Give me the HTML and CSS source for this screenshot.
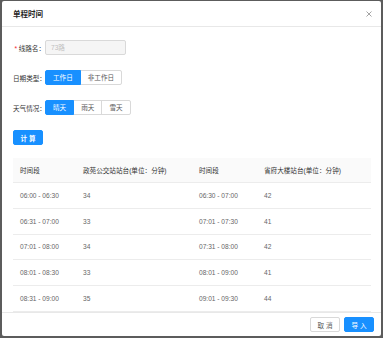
FILE: index.html
```html
<!DOCTYPE html>
<html lang="zh-CN">
<head>
    <meta charset="UTF-8">
    <meta name="viewport" content="width=device-width, initial-scale=1.0">
    <title>单程时间</title>
    <link rel="stylesheet" href="styles.css">
</head>
<body>

    <div class="modal">
        <div class="modal-header">
            <span class="modal-title">单程时间</span>
            <svg class="close" width="6" height="6" viewBox="0 0 6 6">
                <path d="M0.5 0.5 L5.5 5.5 M5.5 0.5 L0.5 5.5" stroke="#999" stroke-width="0.9" fill="none"/>
            </svg>
        </div>

        <div class="modal-body">
            <div class="form-row">
                <label class="form-label"><span class="required">*</span>线路名：</label>
                <div class="input disabled">73路</div>
            </div>

            <div class="form-row">
                <label class="form-label">日期类型：</label>
                <div class="radio-group">
                    <span class="radio active">工作日</span>
                    <span class="radio">非工作日</span>
                </div>
            </div>

            <div class="form-row">
                <label class="form-label">天气情况：</label>
                <div class="radio-group">
                    <span class="radio active">晴天</span>
                    <span class="radio">雨天</span>
                    <span class="radio">雪天</span>
                </div>
            </div>

            <button class="btn btn-primary calc">计 算</button>

            <table class="time-table">
                <colgroup>
                    <col style="width: 63px">
                    <col style="width: 116px">
                    <col style="width: 65px">
                    <col>
                </colgroup>
                <thead>
                    <tr>
                        <th>时间段</th>
                        <th>政苑公交站站台(单位：分钟)</th>
                        <th>时间段</th>
                        <th>省府大楼站台(单位：分钟)</th>
                    </tr>
                </thead>
                <tbody>
                    <tr><td>06:00 - 06:30</td><td>34</td><td>06:30 - 07:00</td><td>42</td></tr>
                    <tr><td>06:31 - 07:00</td><td>33</td><td>07:01 - 07:30</td><td>41</td></tr>
                    <tr><td>07:01 - 08:00</td><td>34</td><td>07:31 - 08:00</td><td>42</td></tr>
                    <tr><td>08:01 - 08:30</td><td>33</td><td>08:01 - 09:00</td><td>41</td></tr>
                    <tr><td>08:31 - 09:00</td><td>35</td><td>09:01 - 09:30</td><td>44</td></tr>
                </tbody>
            </table>
        </div>

        <div class="modal-footer">
            <button class="btn">取 消</button>
            <button class="btn btn-primary">导 入</button>
        </div>
    </div>

</body>
</html>
```

FILE: styles.css
```css
body {
    font-family: "Liberation Sans", "Noto Sans CJK SC", sans-serif;
    background: #5c5c5c;
    margin: 0;
    height: 338px;
    overflow: hidden;
}
.modal {
    margin: 1px 2px 0 2px;
    height: 335px;
    background: #ffffff;
    border-radius: 2px;
    display: flex;
    flex-direction: column;
    overflow: hidden;
}
.modal-header {
    height: 25px;
    flex-shrink: 0;
    display: flex;
    align-items: center;
    justify-content: space-between;
    padding: 0 9px 0 11px;
    border-bottom: 1px solid #e8e8e8;
}
.modal-title {
    font-size: 7.5px;
    font-weight: 600;
    color: #262626;
}
.close {
    display: block;
}
.modal-body {
    flex: 1;
    padding: 13px 11px 0 11px;
    overflow: hidden;
}
.form-row {
    display: flex;
    align-items: center;
    height: 15px;
    margin-bottom: 15px;
}
.form-label {
    width: 32px;
    text-align: right;
    font-size: 6.6px;
    color: #333;
    white-space: nowrap;
}
.required {
    color: #f5222d;
    margin-right: 1.5px;
}
.input {
    box-sizing: border-box;
    width: 81px;
    height: 15px;
    line-height: 13px;
    padding: 0 5px;
    border: 1px solid #d9d9d9;
    border-radius: 2px;
    font-size: 6.6px;
}
.input.disabled {
    background: #f5f5f5;
    color: #bfbfbf;
}
.radio-group {
    display: flex;
}
.radio {
    box-sizing: border-box;
    height: 15px;
    line-height: 13px;
    padding: 0 7px;
    font-size: 6.6px;
    color: #595959;
    border: 1px solid #d9d9d9;
    margin-left: -1px;
}
.radio:first-child {
    margin-left: 0;
    border-radius: 2px 0 0 2px;
}
.radio:last-child {
    border-radius: 0 2px 2px 0;
}
.radio.active {
    background: #1890ff;
    border-color: #1890ff;
    color: #ffffff;
    position: relative;
}
.btn {
    box-sizing: border-box;
    height: 15px;
    width: 30px;
    padding: 0;
    font-family: inherit;
    font-size: 6.6px;
    color: #595959;
    background: #ffffff;
    border: 1px solid #d9d9d9;
    border-radius: 2px;
    cursor: pointer;
}
.btn-primary {
    background: #1890ff;
    border-color: #1890ff;
    color: #ffffff;
}
.calc {
    display: block;
    margin: 0 0 13px 0;
    font-weight: bold;
}
.time-table {
    width: 358px;
    border-collapse: collapse;
    table-layout: fixed;
    font-size: 6.6px;
}
.time-table th,
.time-table td {
    text-align: left;
    padding: 0 7px;
    border-bottom: 1px solid #ececec;
    white-space: nowrap;
}
.time-table th {
    height: 24px;
    background: #fafafa;
    color: #333;
    font-weight: normal;
}
.time-table td {
    height: 24.8px;
    color: #666;
}
.modal-footer {
    height: 23px;
    flex-shrink: 0;
    border-top: 1px solid #e8e8e8;
    display: flex;
    align-items: center;
    justify-content: flex-end;
    gap: 4px;
    padding-right: 7px;
}
```
